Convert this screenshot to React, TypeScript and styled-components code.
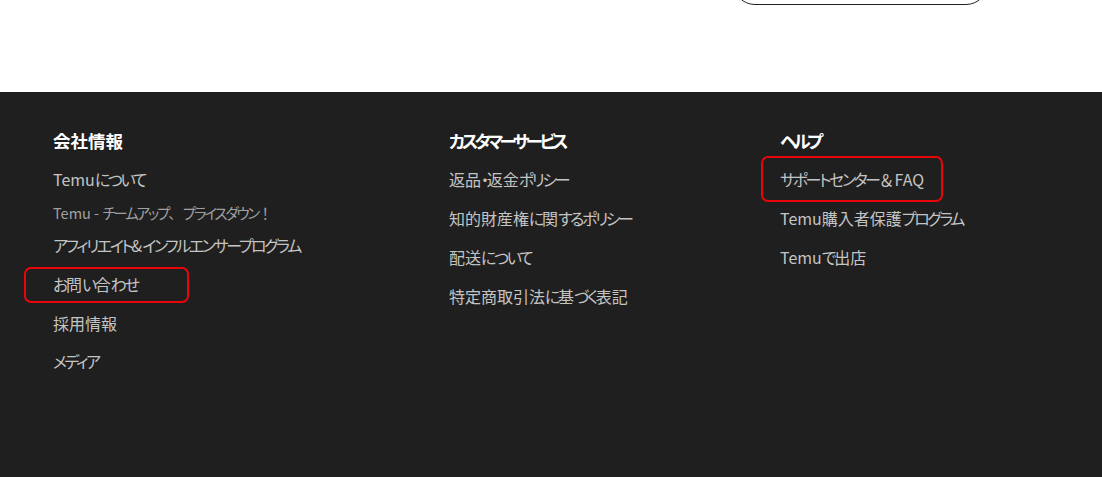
import styled, { createGlobalStyle, css } from "styled-components"

const GlobalStyle = createGlobalStyle`
  html, body {
    margin: 0;
    padding: 0;
    background: #ffffff;
  }
  body {
    font-family: "Noto Sans CJK JP", "Noto Sans", sans-serif;
    font-feature-settings: "palt";
  }
`

const Page = styled.div`
  width: 1102px;
  height: 477px;
  overflow: hidden;
`

const TopArea = styled.div`
  height: 92px;
  display: flex;
  background: #ffffff;
`

const PillButton = styled.button`
  margin: -39px 0 0 733px;
  width: 255px;
  height: 44px;
  border: 1px solid #222222;
  border-radius: 22px;
  background: #ffffff;
`

const Footer = styled.footer`
  background: #1f1f1f;
  height: 385px;
  padding: 29px 0 0 53px;
  box-sizing: border-box;
  display: grid;
  grid-template-columns: 396px 331px 1fr;
  align-items: start;
`

const Column = styled.div`
  display: flex;
  flex-direction: column;
`

// kana in the reference font are narrower than kanji
const Kana = styled.span`
  letter-spacing: -0.15em;
`

// full-width punctuation keeps its full width
const Wide = styled.span`
  font-feature-settings: normal;
`

const Heading = styled.h3`
  margin: 0;
  height: 38.8px;
  display: flex;
  align-items: center;
  font-size: 17.5px;
  font-weight: 700;
  color: #ffffff;
  white-space: pre;

  ${Kana} {
    letter-spacing: -0.2em;
  }
`

type Box = { top: number; right: number; bottom: number; left: number }

type LinkProps = {
  $small?: boolean
  $box?: Box
}

const LinkItem = styled.a<LinkProps>`
  position: relative;
  display: flex;
  align-items: center;
  align-self: flex-start;
  height: 38.8px;
  font-size: 16px;
  color: #c4c4c4;
  text-decoration: none;
  white-space: pre;

  ${p =>
    p.$small &&
    css`
      height: 27px;
      font-size: 14.5px;
      color: #a0a0a0;
    `}

  ${p =>
    p.$box &&
    css`
      &::after {
        content: "";
        position: absolute;
        top: ${p.$box.top}px;
        right: ${p.$box.right}px;
        bottom: ${p.$box.bottom}px;
        left: ${p.$box.left}px;
        border: 2px solid #e8060b;
        border-radius: 7px;
      }
    `}
`

const SPLIT = /([\u3040-\u30ff]+|[\u3001\uff01-\uff0f]+)/
const WIDE = /^[\u3001\uff01-\uff0f]+$/

function Label({ text }: { text: string }) {
  return (
    <>
      {text.split(SPLIT).map((part, i) => {
        if (i % 2 === 0) return part
        return WIDE.test(part) ? (
          <Wide key={i}>{part}</Wide>
        ) : (
          <Kana key={i}>{part}</Kana>
        )
      })}
    </>
  )
}

type Link = { label: string; small?: boolean; box?: Box }

const columns: { title: string; links: Link[] }[] = [
  {
    title: "会社情報",
    links: [
      { label: "Temuについて" },
      { label: "Temu - チームアップ、プライスダウン！", small: true },
      { label: "アフィリエイト&インフルエンサープログラム" },
      {
        label: "お問い合わせ",
        box: { top: 3, right: -52, bottom: 0, left: -29 },
      },
      { label: "採用情報" },
      { label: "メディア" },
    ],
  },
  {
    title: "カスタマーサービス",
    links: [
      { label: "返品・返金ポリシー" },
      { label: "知的財産権に関するポリシー" },
      { label: "配送について" },
      { label: "特定商取引法に基づく表記" },
    ],
  },
  {
    title: "ヘルプ",
    links: [
      {
        label: "サポートセンター＆FAQ",
        box: { top: -4, right: -19, bottom: -3, left: -19 },
      },
      { label: "Temu購入者保護プログラム" },
      { label: "Temuで出店" },
    ],
  },
]

export default function App() {
  return (
    <Page>
      <GlobalStyle />
      <TopArea>
        <PillButton type="button" />
      </TopArea>
      <Footer>
        {columns.map(col => (
          <Column key={col.title}>
            <Heading>
              <Label text={col.title} />
            </Heading>
            {col.links.map(link => (
              <LinkItem
                key={link.label}
                href="#"
                $small={link.small}
                $box={link.box}
              >
                <Label text={link.label} />
              </LinkItem>
            ))}
          </Column>
        ))}
      </Footer>
    </Page>
  )
}
